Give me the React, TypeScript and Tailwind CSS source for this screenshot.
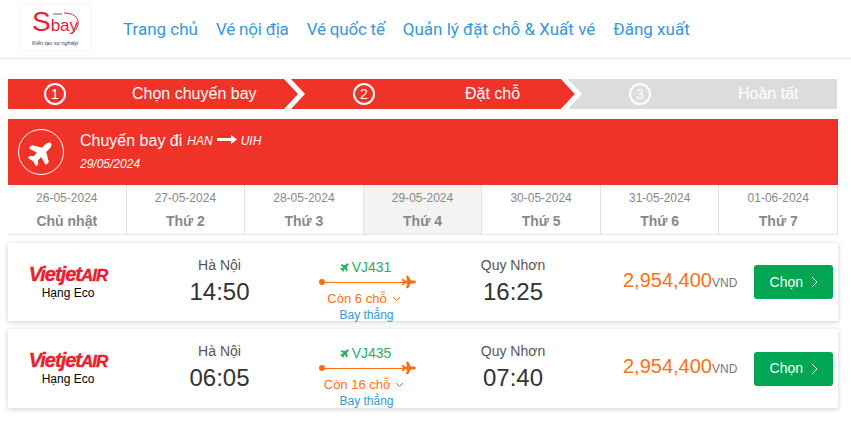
import { FaPlane } from 'react-icons/fa'

// The two "Vé" items sit a little tighter than the others in the reference
const NAV = [
  { label: 'Trang chủ', cls: '' },
  { label: 'Vé nội địa', cls: 'tracking-[-0.2px]' },
  { label: 'Vé quốc tế', cls: 'tracking-[-0.2px]' },
  { label: 'Quản lý đặt chỗ & Xuất vé', cls: '' },
  { label: 'Đăng xuất', cls: '' },
]

const DAYS = [
  { date: '26-05-2024', label: 'Chủ nhật' },
  { date: '27-05-2024', label: 'Thứ 2' },
  { date: '28-05-2024', label: 'Thứ 3' },
  { date: '29-05-2024', label: 'Thứ 4', active: true },
  { date: '30-05-2024', label: 'Thứ 5' },
  { date: '31-05-2024', label: 'Thứ 6' },
  { date: '01-06-2024', label: 'Thứ 7' },
]

const FLIGHTS = [
  { code: 'VJ431', from: '14:50', to: '16:25', seats: 'Còn 6 chỗ', h: 'h-[78px]' },
  { code: 'VJ435', from: '06:05', to: '07:40', seats: 'Còn 16 chỗ', h: 'h-[79px]' },
]

function Logo() {
  return (
    <div className="relative flex h-[47px] w-[72px] flex-col items-center border border-[#f4f4f4] pt-[5px]">
      <div className="flex items-baseline text-[#e8212e]">
        <span className="text-[28px] leading-[24px]">S</span>
        <span className="text-[17px] leading-[20px]">bay</span>
      </div>
      <span className="mt-[4px] text-[5.5px] leading-[6px] whitespace-nowrap text-[#1f3a68] italic">Kiến tạo sự nghiệp</span>
      <svg className="absolute top-[5px] left-[28px]" width="34" height="28" viewBox="0 0 34 28" fill="none">
        <path d="M5 4 H14" stroke="#3a6ea8" strokeWidth="1" />
        <path d="M16 3 C25 3 31 7 30 14 C29 19 27 21 24 23" stroke="#e8212e" strokeWidth="1" />
      </svg>
    </div>
  )
}

function Circle({ n }: { n: number }) {
  return (
    <span className="flex h-[22px] w-[22px] shrink-0 items-center justify-center rounded-full border-2 border-white text-[14px] text-white">
      {n}
    </span>
  )
}

function Stepper() {
  return (
    <div className="mx-2 mt-5 flex h-[30px] w-[829px] text-[16px] text-white">
      <div className="relative flex w-[276px] items-center bg-[#f03329] pl-[36px]">
        <Circle n={1} />
        <span className="ml-[66px]">Chọn chuyến bay</span>
      </div>
      <div className="relative flex w-[277px] items-center bg-[#f03329] pl-[69px]">
        <svg className="absolute top-0 left-0" width="22" height="30" viewBox="0 0 22 30">
          <polygon points="0,0 7,0 21,15 7,30 0,30 14,15" fill="#fff" />
        </svg>
        <Circle n={2} />
        <span className="ml-[90px]">Đặt chỗ</span>
      </div>
      <div className="relative flex flex-1 items-center bg-[#dcdcdc] pl-[68px]">
        <svg className="absolute top-0 left-0" width="22" height="30" viewBox="0 0 22 30">
          <polygon points="0,0 14,15 0,30" fill="#f03329" />
          <polygon points="0,0 7,0 21,15 7,30 0,30 14,15" fill="#fff" />
        </svg>
        <Circle n={3} />
        <span className="ml-[87px]">Hoàn tất</span>
      </div>
    </div>
  )
}

function Banner() {
  return (
    <div className="mx-2 mt-[10px] flex h-[66px] w-[830px] items-center bg-[#f03329] pl-[10px] text-white">
      <div className="flex h-[46px] w-[46px] items-center justify-center rounded-full border border-white">
        <FaPlane className="-rotate-45 text-[27px]" />
      </div>
      <div className="ml-4 -translate-y-px">
        <div className="flex items-center text-[16px] leading-[22px]">
          Chuyến bay đi
          <i className="ml-[5px] text-[12px]">HAN</i>
          <svg className="mx-[4px] -translate-y-px" width="20" height="10" viewBox="0 0 20 10">
            <path d="M0 3 H14 V0 L20 4.5 L14 9 V6 H0 Z" fill="#fff" />
          </svg>
          <i className="text-[12px]">UIH</i>
        </div>
        <div className="mt-[3px] text-[12px] leading-[18px] italic">29/05/2024</div>
      </div>
    </div>
  )
}

function DateStrip() {
  return (
    <div className="mx-2 flex h-[50px] w-[830px] border-b border-[#e6e6e6]">
      {DAYS.map((d) => (
        <div
          key={d.date}
          className={`flex flex-1 flex-col items-center border-r border-[#e2e2e2] ${d.active ? 'bg-[#f3f3f3]' : 'bg-white'}`}
        >
          <span className="mt-[5px] text-[12px] leading-[16px] text-[#888]">{d.date}</span>
          <span className="mt-[7px] text-[14px] leading-[16px] font-bold text-[#888]">{d.label}</span>
        </div>
      ))}
    </div>
  )
}

function FlightCard({ code, from, to, seats, h }: (typeof FLIGHTS)[number]) {
  return (
    <div className={`mx-2 flex w-[830px] items-start bg-white shadow-[0_1px_5px_rgba(0,0,0,0.2)] ${h}`}>
      <div className="flex w-[120px] flex-col items-center pt-[21px]">
        <span className="inline-block text-[20px] leading-[20px] font-bold tracking-[-1px] text-[#e8212e] italic [-webkit-text-stroke:0.4px_#e8212e]">
          Vietjet<span className="text-[17px]">AIR</span>
        </span>
        <span className="text-[12px] leading-[14px] text-black">Hạng Eco</span>
      </div>
      <div className="flex w-[183px] flex-col items-center pt-[13px]">
        <span className="text-[14px] leading-[18px] text-[#555]">Hà Nội</span>
        <span className="mt-[3px] text-[24px] leading-[30px] text-[#333]">{from}</span>
      </div>
      <div className="flex w-[109px] flex-col items-center pt-[16px]">
        <div className="flex items-center text-[14px] leading-[16px] text-[#27ae60]">
          <FaPlane className="mr-[2px] -rotate-45 text-[10px]" />
          {code}
        </div>
        <div className="relative mt-[3px] mb-[5px] h-[8px] w-[100px]">
          <span className="absolute top-[1px] left-[3px] h-[6px] w-[6px] rounded-full bg-[#ff6f0f]" />
          <span className="absolute top-[4px] left-[6px] h-px w-[84px] bg-[#ff6f0f]" />
          <FaPlane className="absolute top-[-3px] left-[86px] text-[14px] text-[#ff6f0f]" />
        </div>
        <div className="-ml-[3px] flex items-center text-[13px] leading-[16px] text-[#ff7010]">
          {seats}
          <svg className="ml-[5px]" width="9" height="6" viewBox="0 0 9 6" fill="none">
            <path d="M1 1 L4.5 4.5 L8 1" stroke="#ff7010" />
          </svg>
        </div>
        <span className="ml-[2px] text-[12px] leading-[16px] text-[#3498db]">Bay thẳng</span>
      </div>
      <div className="flex w-[186px] flex-col items-center pt-[13px]">
        <span className="text-[14px] leading-[18px] text-[#555]">Quy Nhơn</span>
        <span className="mt-[3px] text-[24px] leading-[30px] text-[#333]">{to}</span>
      </div>
      <div className="mt-[23px] ml-[17px] flex items-baseline leading-[28px]">
        <span className="text-[20px] text-[#ff7010]">2,954,400</span>
        <span className="text-[12px] text-[#777]">VND</span>
      </div>
      <button className="ml-[17px] flex h-[34px] w-[79px] items-center justify-center self-center rounded-[3px] bg-[#00a651] text-[14px] text-white">
        Chọn
        <svg className="ml-[8px]" width="7" height="12" viewBox="0 0 7 12" fill="none">
          <path d="M1 1 L6 6 L1 11" stroke="#fff" />
        </svg>
      </button>
    </div>
  )
}

export default function App() {
  return (
    <div className="h-[439px] w-[851px] overflow-hidden bg-white font-['Liberation_Sans',sans-serif]">
      <header className="flex h-[59px] items-start border-b border-[#eaeaea] pt-1 pl-[19px]">
        <Logo />
        <nav className="mt-[15px] ml-[32px] flex gap-[18px] font-['Roboto',sans-serif] text-[17px] leading-[20px] text-[#3498db]">
          {NAV.map((n) => (
            <span key={n.label} className={n.cls}>
              {n.label}
            </span>
          ))}
        </nav>
      </header>
      <Stepper />
      <Banner />
      <DateStrip />
      <div className="mt-2 flex flex-col gap-2">
        {FLIGHTS.map((f) => (
          <FlightCard key={f.code} {...f} />
        ))}
      </div>
    </div>
  )
}
